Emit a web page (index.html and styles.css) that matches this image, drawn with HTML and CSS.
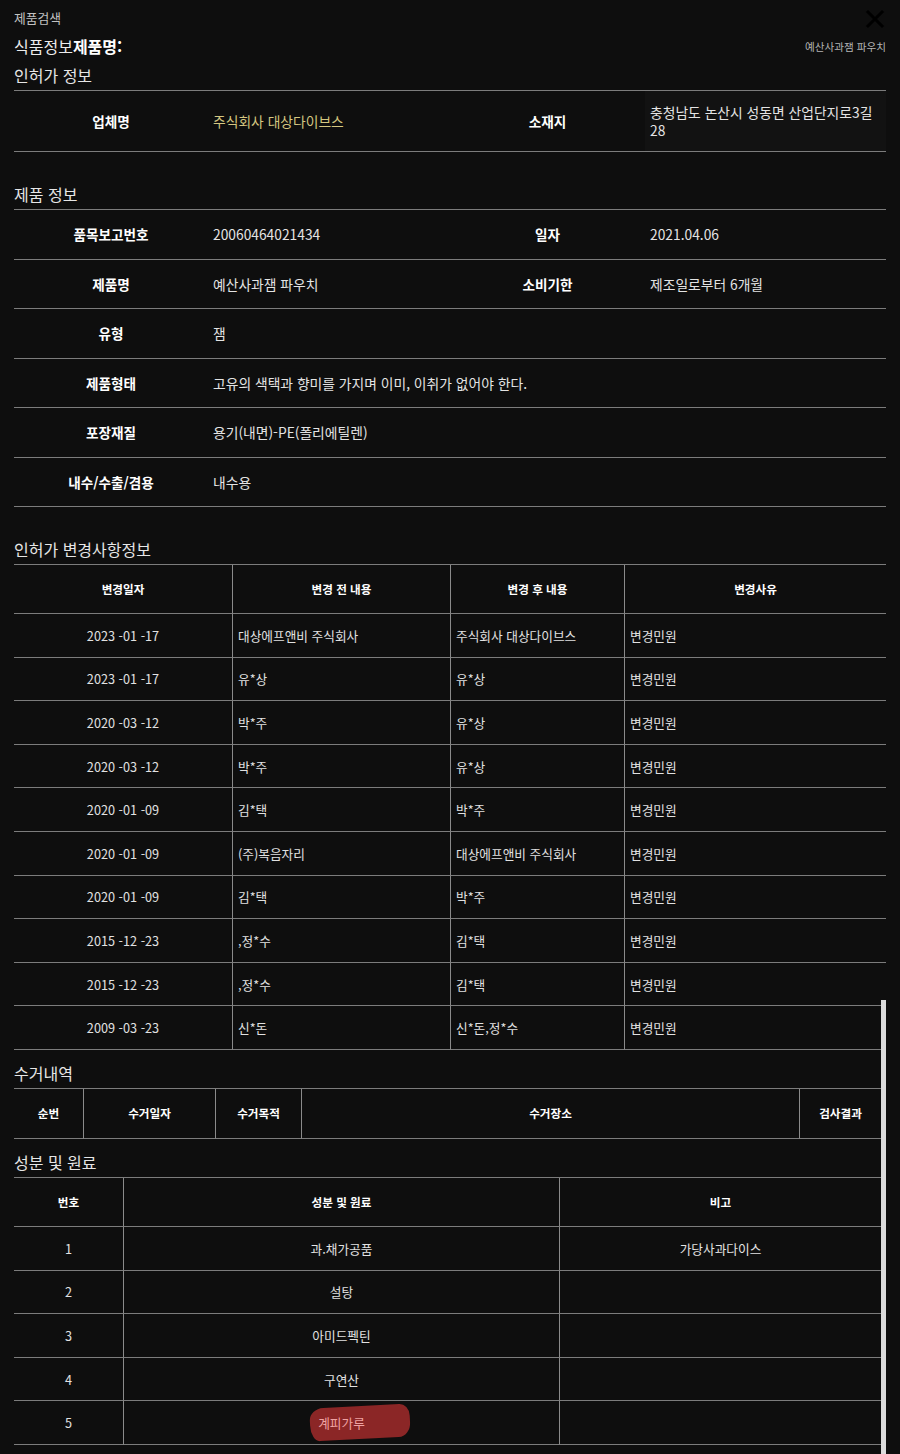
FILE: index.html
```html
<!DOCTYPE html>
<html lang="ko">
<head>
<meta charset="utf-8">
<title>제품검색</title>
<link rel="stylesheet" href="styles.css">
</head>
<body>
<div class="page">
  <button class="close" aria-label="닫기">
    <svg width="20" height="20" viewBox="0 0 20 20"><path d="M3 3 L17 17 M17 3 L3 17" stroke="#000" stroke-width="3" stroke-linecap="square"/></svg>
  </button>
  <div class="crumb">제품검색</div>
  <div class="title-row">
    <h1 class="title">식품정보<b>제품명:</b></h1>
    <span class="subtitle">예산사과잼 파우치</span>
  </div>

  <section class="sec">
    <h2 class="sec-title">인허가 정보</h2>
    <table class="kv kv-tall">
      <colgroup><col class="c-l1"><col class="c-v1"><col class="c-l2"><col class="c-v2"></colgroup>
      <tr>
        <th>업체명</th><td class="gold">주식회사 대상다이브스</td>
        <th>소재지</th><td class="addr">충청남도 논산시 성동면 산업단지로3길 28</td>
      </tr>
    </table>
  </section>

  <section class="sec sec-gap">
    <h2 class="sec-title">제품 정보</h2>
    <table class="kv kv-rows">
      <colgroup><col class="c-l1"><col class="c-v1"><col class="c-l2"><col class="c-v2"></colgroup>
      <tr><th>품목보고번호</th><td>20060464021434</td><th>일자</th><td>2021.04.06</td></tr>
      <tr><th>제품명</th><td>예산사과잼 파우치</td><th>소비기한</th><td>제조일로부터 6개월</td></tr>
      <tr><th>유형</th><td colspan="3">잼</td></tr>
      <tr><th>제품형태</th><td colspan="3">고유의 색택과 향미를 가지며 이미, 이취가 없어야 한다.</td></tr>
      <tr><th>포장재질</th><td colspan="3">용기(내면)-PE(폴리에틸렌)</td></tr>
      <tr><th>내수/수출/겸용</th><td colspan="3">내수용</td></tr>
    </table>
  </section>

  <section class="sec sec-gap">
    <h2 class="sec-title">인허가 변경사항정보</h2>
    <table class="grid changes">
      <colgroup><col class="ch1"><col class="ch2"><col class="ch3"><col class="ch4"></colgroup>
      <thead><tr><th>변경일자</th><th>변경 전 내용</th><th>변경 후 내용</th><th>변경사유</th></tr></thead>
      <tbody>
        <tr><td class="center">2023 -01 -17</td><td>대상에프앤비 주식회사</td><td>주식회사 대상다이브스</td><td>변경민원</td></tr>
        <tr><td class="center">2023 -01 -17</td><td>유*상</td><td>유*상</td><td>변경민원</td></tr>
        <tr><td class="center">2020 -03 -12</td><td>박*주</td><td>유*상</td><td>변경민원</td></tr>
        <tr><td class="center">2020 -03 -12</td><td>박*주</td><td>유*상</td><td>변경민원</td></tr>
        <tr><td class="center">2020 -01 -09</td><td>김*택</td><td>박*주</td><td>변경민원</td></tr>
        <tr><td class="center">2020 -01 -09</td><td>(주)복음자리</td><td>대상에프앤비 주식회사</td><td>변경민원</td></tr>
        <tr><td class="center">2020 -01 -09</td><td>김*택</td><td>박*주</td><td>변경민원</td></tr>
        <tr><td class="center">2015 -12 -23</td><td>,정*수</td><td>김*택</td><td>변경민원</td></tr>
        <tr><td class="center">2015 -12 -23</td><td>,정*수</td><td>김*택</td><td>변경민원</td></tr>
        <tr><td class="center">2009 -03 -23</td><td>신*돈</td><td>신*돈,정*수</td><td>변경민원</td></tr>
      </tbody>
    </table>
  </section>

  <section class="sec sec-tight narrow">
    <h2 class="sec-title">수거내역</h2>
    <table class="grid recall">
      <colgroup><col class="r1"><col class="r2"><col class="r3"><col class="r4"><col class="r5"></colgroup>
      <thead><tr><th>순번</th><th>수거일자</th><th>수거목적</th><th>수거장소</th><th>검사결과</th></tr></thead>
    </table>
  </section>

  <section class="sec sec-tight narrow">
    <h2 class="sec-title">성분 및 원료</h2>
    <table class="grid ingr">
      <colgroup><col class="i1"><col class="i2"><col class="i3"></colgroup>
      <thead><tr><th>번호</th><th>성분 및 원료</th><th>비고</th></tr></thead>
      <tbody>
        <tr><td class="center">1</td><td class="center">과.채가공품</td><td class="center">가당사과다이스</td></tr>
        <tr><td class="center">2</td><td class="center">설탕</td><td class="center"></td></tr>
        <tr><td class="center">3</td><td class="center">아미드펙틴</td><td class="center"></td></tr>
        <tr><td class="center">4</td><td class="center">구연산</td><td class="center"></td></tr>
        <tr><td class="center">5</td><td class="center"><span class="marked">계피가루</span></td><td class="center"></td></tr>
      </tbody>
    </table>
  </section>

  <div class="scrollbar"></div>
</div>
</body>
</html>
```

FILE: styles.css
```css
html, body {
  margin: 0;
  padding: 0;
  background: #0e0e0e;
  overflow: hidden;
}

body {
  font-family: "Noto Sans CJK KR", "Noto Sans", "Liberation Sans", sans-serif;
  color: #e2e2e2;
}

.page {
  position: relative;
  box-sizing: border-box;
  min-height: 1454px;
  padding: 8px 14px 0;
}

.close {
  position: absolute;
  top: 9px;
  right: 15px;
  width: 20px;
  height: 20px;
  padding: 0;
  border: 0;
  background: none;
}

.close svg {
  display: block;
}

.crumb {
  font-size: 12.8px;
  line-height: 20px;
  color: #c2c2c2;
}

.title-row {
  display: flex;
  justify-content: space-between;
  align-items: center;
  padding-top: 4px;
  height: 28px;
}

.title {
  margin: 0;
  font-size: 16px;
  font-weight: 400;
  line-height: 28px;
  color: #ececec;
}

.title b {
  font-weight: 700;
  color: #ffffff;
}

.subtitle {
  font-size: 10.6px;
  line-height: 14px;
  color: #b4b4b4;
  margin-top: 2px;
}

.sec-title {
  margin: 0;
  font-size: 16px;
  font-weight: 400;
  line-height: 30px;
  color: #e6e6e6;
}

.sec-gap {
  margin-top: 27px;
}

.sec-tight {
  margin-top: 8px;
}

.narrow {
  margin-right: 5px;
}

/* key/value tables */
.kv {
  width: 100%;
  table-layout: fixed;
  border-collapse: separate;
  border-spacing: 0;
  border-top: 1px solid #7c7c7c;
}

.kv th,
.kv td {
  box-sizing: border-box;
  padding: 0 4px;
  border-bottom: 1px solid #7c7c7c;
  vertical-align: middle;
}

.kv th {
  font-size: 13.6px;
  font-weight: 700;
  color: #ffffff;
  text-align: center;
}

.kv td {
  font-size: 13.8px;
  font-weight: 400;
  color: #e4e4e4;
  text-align: left;
  padding-left: 5px;
}

.kv-tall th,
.kv-tall td {
  height: 61px;
}

.kv-rows th,
.kv-rows td {
  height: 49.5px;
}

.c-l1 { width: 194px; }
.c-v1 { width: 242px; }
.c-l2 { width: 195px; }

.gold {
  color: #d4c680 !important;
}

.addr {
  line-height: 18px;
  background: #121212;
}

/* grid tables */
.grid {
  width: 100%;
  table-layout: fixed;
  border-collapse: separate;
  border-spacing: 0;
  border-top: 1px solid #7c7c7c;
}

.grid th,
.grid td {
  box-sizing: border-box;
  padding: 0 5px;
  border-bottom: 1px solid #7c7c7c;
  vertical-align: middle;
}

.grid th + th,
.grid td + td {
  border-left: 1px solid #8a8a8a;
}

.grid th {
  height: 49px;
  font-size: 11.6px;
  font-weight: 700;
  color: #ffffff;
  text-align: center;
}

.grid td {
  height: 43.6px;
  font-size: 12.7px;
  color: #e2e2e2;
  text-align: left;
}

.grid td.center {
  text-align: center;
}

.recall th {
  height: 50px;
}

.ch1 { width: 218px; }
.ch2 { width: 218px; }
.ch3 { width: 174px; }

.r1 { width: 69px; }
.r2 { width: 132px; }
.r3 { width: 86px; }
.r5 { width: 82px; }

.i1 { width: 109px; }
.i2 { width: 436px; }

.marked {
  position: relative;
  z-index: 0;
  display: inline-block;
  color: #efa3a3;
  margin-right: 0;
}

.marked::before {
  content: "";
  position: absolute;
  z-index: -1;
  left: -8px;
  top: -7px;
  width: 100px;
  height: 33px;
  background: #8b2626;
  border-radius: 14px 10px 12px 9px / 12px 12px 14px 16px;
  transform: rotate(-3deg);
}

.scrollbar {
  position: absolute;
  top: 1000px;
  right: 14px;
  bottom: 0;
  width: 5px;
  background: #dcdcdc;
}
```
